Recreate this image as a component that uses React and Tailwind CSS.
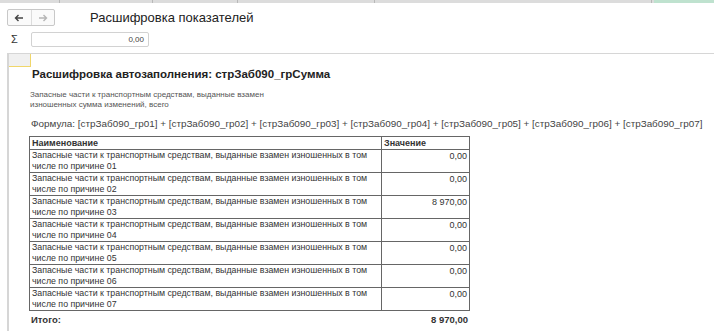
import React from "react";

const rows = [
    { name: "01", value: "0,00" },
    { name: "02", value: "0,00" },
    { name: "03", value: "8 970,00" },
    { name: "04", value: "0,00" },
    { name: "05", value: "0,00" },
    { name: "06", value: "0,00" },
    { name: "07", value: "0,00" },
];

const formula = "Формула: " + rows.map((r) => "[стрЗаб090_гр" + r.name + "]").join(" + ");

function NavButtons() {
    return (
        <div className="flex h-[17px] w-[48px] border border-[#c8c8c8] rounded-[2px] bg-[#fafafa]">
            <div className="flex-1 flex items-center justify-center border-r border-[#dcdcdc]">
                <svg width="10" height="8" viewBox="0 0 10 8">
                    <path d="M9 4H1.5M4.5 1L1.5 4l3 3" stroke="#444" strokeWidth="1.4" fill="none" />
                </svg>
            </div>
            <div className="flex-1 flex items-center justify-center">
                <svg width="10" height="8" viewBox="0 0 10 8">
                    <path d="M1 4h7.5M5.5 1l3 3-3 3" stroke="#b5b5b5" strokeWidth="1.4" fill="none" />
                </svg>
            </div>
        </div>
    );
}

function DetailTable() {
    return (
        <table className="border-collapse w-[441px] mt-[6px] ml-[-1px] text-[8.8px] leading-[11px] text-[#333]">
            <thead>
                <tr>
                    <th className="border border-[#666] px-[2px] h-[13px] text-left font-bold w-[352px] text-[9px]">Наименование</th>
                    <th className="border border-[#666] px-[2px] h-[13px] text-left font-bold text-[9px]">Значение</th>
                </tr>
            </thead>
            <tbody>
                {rows.map((row) => (
                    <tr key={row.name}>
                        <td className="border border-[#666] px-[2px] h-[23px] align-top">
                            <span className="block whitespace-nowrap">Запасные части к транспортным средствам, выданные взамен изношенных в том</span>
                            <span className="block">числе по причине {row.name}</span>
                        </td>
                        <td className="border border-[#666] px-[2px] pt-[1px] align-top text-right text-[9px]">{row.value}</td>
                    </tr>
                ))}
            </tbody>
        </table>
    );
}

export default function App() {
    return (
        <div className="w-[714px] h-[331px] overflow-hidden bg-white text-[#333] font-['Liberation_Sans',Arial,sans-serif]">
            {/* tabs strip */}
            <div className="flex h-[3px] bg-[#dcdcdc]">
                <div className="w-[60px] border-r border-[#b8b8b8]"></div>
                <div className="w-[93px] border-r border-[#b8b8b8]"></div>
                <div className="w-[85px] border-r border-[#b8b8b8]"></div>
                <div className="w-[137px] border-r border-[#b8b8b8]"></div>
                <div className="w-[277px] border-r border-[#b8b8b8]"></div>
                <div className="flex-1 ml-[2px] bg-[#bfe2cf]"></div>
            </div>

            {/* header */}
            <div className="flex items-center mt-[6px] ml-[7px]">
                <NavButtons />
                <div className="ml-[35px] text-[13px] leading-[16px] text-[#222]">Расшифровка показателей</div>
            </div>

            <div className="flex items-center mt-[6px] h-[15px]">
                <div className="w-[31px] pl-[11px] text-[11px] text-[#333]">Σ</div>
                <div className="w-[118px] h-[15px] border border-[#d2d2d2] rounded-[2px] text-right pr-[4px] text-[8px] leading-[13px] text-[#444]">0,00</div>
            </div>

            {/* panel */}
            <div className="mt-[6px] ml-[7px] h-[300px] border-l-2 border-t border-[#d6d6d6]">
                <div className="w-[22px] h-[13px] bg-[#f0f0f0] border-r border-b border-[#f0d66a]"></div>
                <div className="pl-[21px]">
                    <div className="pl-[2px] text-[11.5px] leading-[14px] font-bold text-[#222]">Расшифровка автозаполнения: стрЗаб090_грСумма</div>
                    <div className="mt-[9px] text-[8px] leading-[10px] text-[#555] w-[260px]">
                        Запасные части к транспортным средствам, выданные взамен изношенных сумма изменений, всего
                    </div>
                    <div className="mt-[7px] pl-[1px] text-[9.9px] leading-[13px] text-[#444] whitespace-nowrap">{formula}</div>
                    <DetailTable />
                    <div className="flex justify-between w-[438px] mt-[3px] text-[9.5px] leading-[12px] font-bold text-[#333]">
                        <span className="pl-[1px]">Итого:</span>
                        <span>8 970,00</span>
                    </div>
                </div>
            </div>
        </div>
    );
}
